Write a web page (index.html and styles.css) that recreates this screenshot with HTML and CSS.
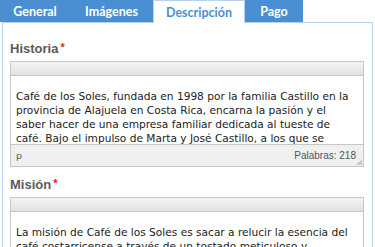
FILE: index.html
```html
<!DOCTYPE html>
<html lang="es">
<head>
    <meta charset="utf-8" />
    <title>Editar producto</title>
    <link rel="stylesheet" href="styles.css">
</head>
<body>
<div class="tabs">
    <a class="tab tab-general">General</a>
    <a class="tab tab-images">Imágenes</a>
    <a class="tab tab-desc active">Descripción</a>
    <a class="tab tab-pay">Pago</a>
</div>
<div class="panel">
    <label class="field-label">Historia<span class="req">*</span></label>
    <div class="editor">
        <div class="editor-toolbar"></div>
        <div class="editor-body">
            <p>Café de los Soles, fundada en 1998 por la familia Castillo en la<br>provincia de Alajuela en Costa Rica, encarna la pasión y el<br>saber hacer de una empresa familiar dedicada al tueste de<br>café. Bajo el impulso de Marta y José Castillo, a los que se</p>
        </div>
        <div class="editor-status">
            <span>p</span>
            <span class="words">Palabras: 218</span>
            <i class="grip"></i>
        </div>
    </div>

    <label class="field-label">Misión<span class="req">*</span></label>
    <div class="editor">
        <div class="editor-toolbar"></div>
        <div class="editor-body">
            <p>La misión de Café de los Soles es sacar a relucir la esencia del<br>café costarricense a través de un tostado meticuloso y</p>
        </div>
    </div>
</div>
</body>
</html>
```

FILE: styles.css
```css
body{margin:0;background:#fff;font-family:"Liberation Sans",Arial,sans-serif;overflow:hidden;height:247px}
.tabs{display:flex;height:22px;position:relative;z-index:1}
.tab{display:flex;align-items:center;justify-content:center;box-sizing:border-box;height:22px;background:#4a8fd1;color:#fff;font-family:Lato,sans-serif;font-weight:bold;font-size:12.5px}
.tab-general{width:70px}
.tab-images{width:83px}
.tab-desc{width:92px}
.tab-pay{width:58px}
.tab.active{background:#fff;color:#4a8fd1;border:1px solid #b9d2ec;border-bottom:none;height:23px}
.panel{margin-left:2px;width:371px;box-sizing:border-box;border:1px solid #b9d2ec;border-bottom:none;padding:16px 8px 0 7px;height:225px;overflow:hidden}
.field-label{display:block;font-weight:bold;font-size:13px;color:#5a5a5a;line-height:16px;margin-bottom:4px}
.req{color:#e02020;font-size:11px;margin-left:2px;vertical-align:2px}
.editor{border:1px solid #c6c6c6;margin-bottom:8px}
.editor-toolbar{height:13px;background:linear-gradient(#f4f4f4,#e2e2e2);border-bottom:1px solid #c6c6c6}
.editor-body{height:68px;overflow:hidden;padding:0 0 0 5px;font-family:"DejaVu Sans",Verdana,sans-serif;font-size:10.6px;line-height:14px;color:#222;white-space:nowrap}
.editor-body p{margin:13px 0 0}
.editor-status{position:relative;display:flex;justify-content:space-between;align-items:center;height:21px;padding:0 5px;background:#f0f0f0;border-top:1px solid #c6c6c6;font-family:"DejaVu Sans",Verdana,sans-serif;font-size:9.5px;color:#555}
.words{font-family:"Liberation Sans",Arial,sans-serif;font-size:10px;margin-right:2px}
.grip{position:absolute;right:1px;bottom:1px;width:0;height:0;border-left:6px solid transparent;border-bottom:6px solid #c8c8c8}
```
